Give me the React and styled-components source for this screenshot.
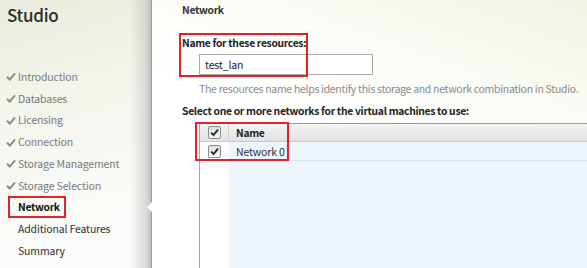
import React from "react";
import styled, { createGlobalStyle, css } from "styled-components";

const FONT = `"Noto Sans CJK KR", "Noto Sans", sans-serif`;

const Global = createGlobalStyle`
  html, body { margin: 0; padding: 0; background: #fff; }
  body { font-family: ${FONT}; }
`;

const boldText = css`
  font-weight: 700;
  font-size: 10.3px;
  letter-spacing: -0.3px;
`;

const Page = styled.div`
  display: flex;
  width: 587px;
  height: 268px;
  overflow: hidden;
  font-family: ${FONT};
  font-size: 10.5px;
  letter-spacing: -0.15px;
  color: #333;
`;

const Sidebar = styled.aside`
  position: relative;
  width: 151px;
  flex-shrink: 0;
  border-right: 1px solid #9c9c9c;
  background:
    linear-gradient(to right, rgba(200,200,200,0) 0%, rgba(200,200,200,0) 86%, rgba(190,190,190,0.55) 97%, rgba(175,175,175,0.8) 100%),
    linear-gradient(165deg, #e9ecdc 0%, #f4f5ec 35%, #fafaf7 70%, #fbfbfa 100%);
`;

const Title = styled.h1`
  margin: 0;
  padding: 3px 0 0 7px;
  font-size: 17px;
  font-weight: 500;
  letter-spacing: -0.3px;
  line-height: 24px;
  color: #2e2e2e;
`;

const NavList = styled.ul`
  list-style: none;
  margin: 39px 0 0;
  padding: 0;
`;

const NavItem = styled.li`
  position: relative;
  display: flex;
  align-items: center;
  height: 21.75px;
  padding-left: 6px;
  color: ${(p) => (p.$done ? "#7a7a7a" : "#333")};
  ${(p) =>
    p.$active &&
    css`
      &::after {
        content: "";
        position: absolute;
        right: -2px;
        top: 50%;
        margin-top: -6px;
        width: 0;
        height: 0;
        border-top: 6px solid transparent;
        border-bottom: 6px solid transparent;
        border-right: 6px solid #fff;
      }
    `}
`;

const CheckSlot = styled.span`
  display: inline-flex;
  width: 12px;
  justify-content: flex-start;
`;

const NavLabel = styled.span`
  line-height: 16px;
  ${(p) =>
    p.$active &&
    css`
      ${boldText}
      color: #111;
      border: 2px solid #e3212b;
      margin-left: -10px;
      padding: 1px 4px 1px 8px;
    `}
`;

const Main = styled.main`
  flex: 1;
  display: flex;
  flex-direction: column;
  padding-left: 30px;
  background: linear-gradient(200deg, #f2f4e6 0%, #fbfcf6 30%, #ffffff 55%);
`;

const Heading = styled.h2`
  margin: 0;
  padding-top: 2px;
  ${boldText}
  line-height: 16px;
  color: #333;
`;

const FieldGroup = styled.div`
  position: relative;
  margin-top: 17px;
  display: flex;
  flex-direction: column;
`;

const Bold = styled.div`
  ${boldText}
  line-height: 16px;
  color: #222;
`;

const TextInput = styled.input`
  margin: 3px 0 0 17px;
  box-sizing: border-box;
  width: 174px;
  height: 21px;
  border: 1px solid #ababab;
  background: #fff;
  padding: 0 5px;
  font: inherit;
  letter-spacing: inherit;
  color: #222;
  outline: none;
`;

const Callout = styled.div`
  position: absolute;
  border: 2px solid #e3212b;
  pointer-events: none;
  left: ${(p) => p.$x}px;
  top: ${(p) => p.$y}px;
  width: ${(p) => p.$w}px;
  height: ${(p) => p.$h}px;
  box-sizing: border-box;
`;

const Helper = styled.div`
  margin: 6px 0 0 17px;
  line-height: 16px;
  letter-spacing: -0.3px;
  color: #8a8a8a;
  white-space: nowrap;
`;

const SelectLabel = styled(Bold)`
  margin-top: 6px;
  white-space: nowrap;
`;

const Grid = styled.div`
  position: relative;
  margin: 4px 0 0 17px;
  flex: 1;
  display: grid;
  grid-template-columns: 29px 1fr;
  grid-template-rows: 18px 19px 1fr;
  border-top: 1px solid #9d9d9d;
  border-left: 1px solid #a6a6a6;
  background: #fff;
`;

const HeadCell = styled.div`
  display: flex;
  align-items: center;
  justify-content: ${(p) => (p.$center ? "center" : "flex-start")};
  padding-left: ${(p) => (p.$center ? 0 : 7)}px;
  background: linear-gradient(#f4f4f4, #e2e2e2);
  border-bottom: 1px solid #c9c9c9;
  border-right: ${(p) => (p.$center ? "1px solid #cfcfcf" : "none")};
  ${boldText}
  color: #222;
`;

const CheckCell = styled.div`
  display: flex;
  align-items: center;
  justify-content: center;
  background: #fff;
`;

const NameCell = styled.div`
  display: flex;
  align-items: center;
  padding-left: 7px;
  background: #eef5fd;
  border-bottom: ${(p) => (p.$line ? "1px solid #dbe5f0" : "none")};
  color: #333;
`;

const Box = styled.span`
  display: inline-flex;
  align-items: center;
  justify-content: center;
  width: 13px;
  height: 13px;
  box-sizing: border-box;
  border: 1px solid #8e8e8e;
  border-radius: 2px;
  background: linear-gradient(#dedede, #f7f7f7);
`;

const NavCheck = () => (
  <svg width="10" height="9" viewBox="0 0 10 9">
    <path d="M1 4.8 L3.8 7.6 L9 1.4" fill="none" stroke="#8c8c8c" strokeWidth="2.1" />
  </svg>
);

const CheckBox = () => (
  <Box>
    <svg width="11" height="11" viewBox="0 0 11 11">
      <path d="M2.2 5.6 L4.5 8 L9 2.6" fill="none" stroke="#2b2b2b" strokeWidth="1.9" />
    </svg>
  </Box>
);

const steps = [
  { label: "Introduction", done: true },
  { label: "Databases", done: true },
  { label: "Licensing", done: true },
  { label: "Connection", done: true },
  { label: "Storage Management", done: true },
  { label: "Storage Selection", done: true },
  { label: "Network", active: true },
  { label: "Additional Features" },
  { label: "Summary" },
];

export default function App() {
  return (
    <>
      <Global />
      <Page>
        <Sidebar>
          <Title>Studio</Title>
          <NavList>
            {steps.map((s) => (
              <NavItem key={s.label} $done={s.done} $active={s.active}>
                <CheckSlot>{s.done && <NavCheck />}</CheckSlot>
                <NavLabel $active={s.active}>{s.label}</NavLabel>
              </NavItem>
            ))}
          </NavList>
        </Sidebar>
        <Main>
          <Heading>Network</Heading>
          <FieldGroup>
            <Bold>Name for these resources:</Bold>
            <TextInput defaultValue="test_lan" />
            <Callout $x={-3} $y={-2} $w={129} $h={44} />
          </FieldGroup>
          <Helper>The resources name helps identify this storage and network combination in Studio.</Helper>
          <SelectLabel>Select one or more networks for the virtual machines to use:</SelectLabel>
          <Grid>
            <HeadCell $center>
              <CheckBox />
            </HeadCell>
            <HeadCell>Name</HeadCell>
            <CheckCell>
              <CheckBox />
            </CheckCell>
            <NameCell $line>Network 0</NameCell>
            <CheckCell />
            <NameCell />
            <Callout $x={-5} $y={-2} $w={94} $h={39} />
          </Grid>
        </Main>
      </Page>
    </>
  );
}
